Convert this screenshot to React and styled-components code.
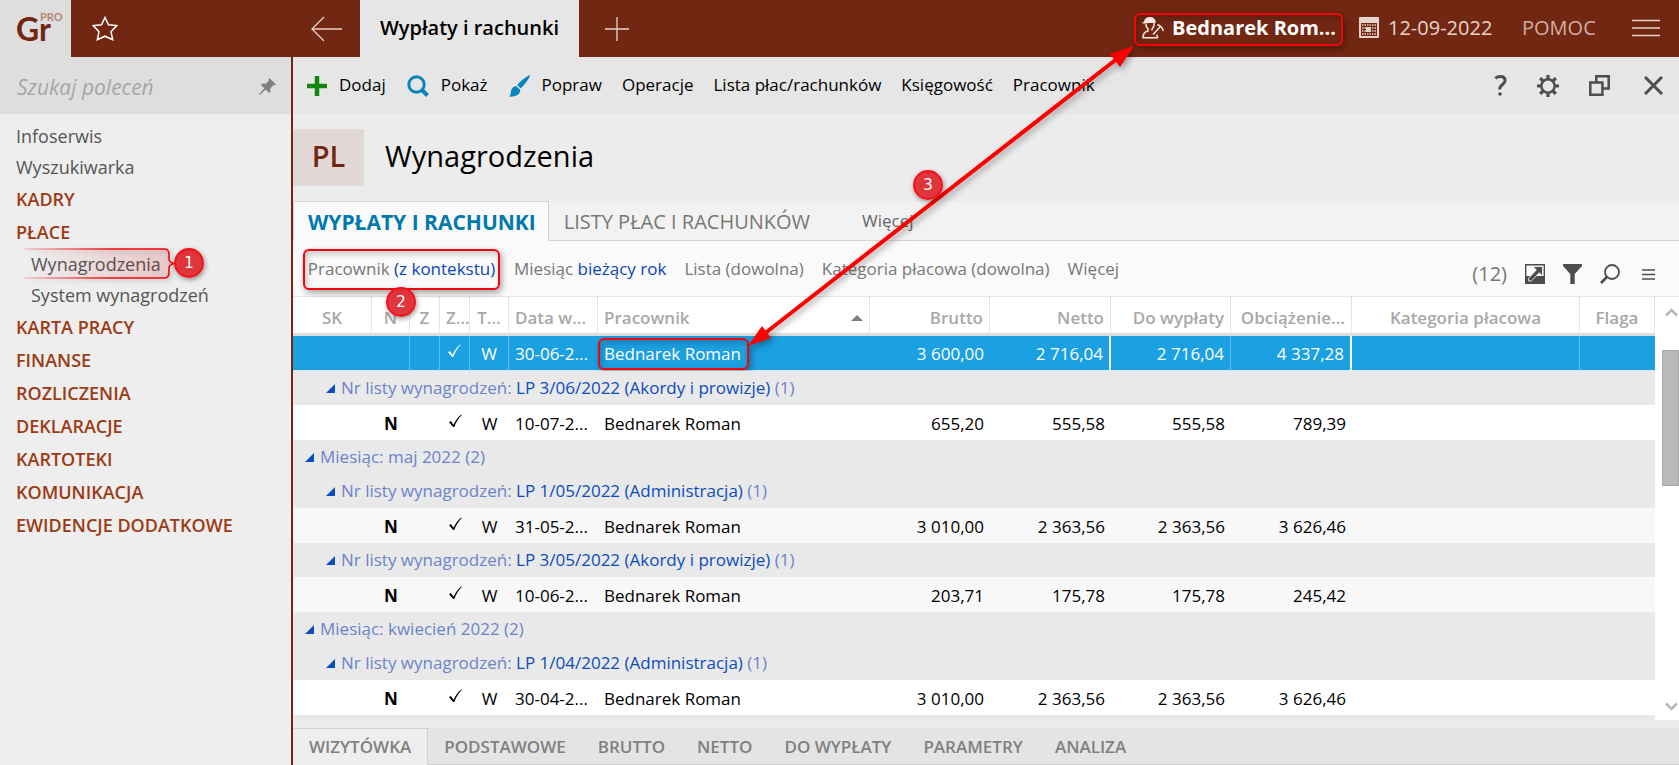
import styled, { createGlobalStyle, css } from "styled-components";

const GlobalStyle = createGlobalStyle`
  * {
    box-sizing: border-box;
  }
  body {
    margin: 0;
    font-family: "Open Sans", "Noto Sans", sans-serif;
    font-size: 17px;
    line-height: 24px;
    color: #000;
  }
  button {
    padding: 0;
    border: 0;
    background: none;
    font: inherit;
    color: inherit;
    white-space: nowrap;
    cursor: pointer;
  }
  svg {
    display: block;
    flex: none;
  }
`;

const Page = styled.div`
  position: relative;
  display: flex;
  flex-direction: column;
  height: 100vh;
  overflow: hidden;
  background: #ececec;
`;

/* top bar */

const TopBar = styled.header`
  display: flex;
  flex: none;
  height: 57px;
  background: #722712;
  color: #e6d3cd;
`;

const TopLeft = styled.div`
  display: flex;
  flex: none;
  width: 293px;
`;

const Logo = styled.a`
  width: 71px;
  background: #dedede;
`;

const TopButton = styled.button`
  display: flex;
  align-items: center;
  justify-content: center;
  width: ${(p) => p.$width}px;
`;

const WindowTab = styled.button`
  width: 219px;
  padding-bottom: 2px;
  background: #e6e6e6;
  color: #000;
  font-size: 20px;
  font-weight: 600;
`;

const TopRight = styled.div`
  display: flex;
  align-items: center;
  margin-left: auto;
  padding: 0 19px 2px 0;
`;

const frame = css`
  border: 2px solid #f5040b;
  border-radius: 6px;
  box-shadow: 2px 3px 6px rgba(0, 0, 0, 0.35), inset 2px 3px 6px rgba(0, 0, 0, 0.2);
`;

const UserButton = styled.button`
  display: flex;
  align-items: center;
  gap: 8px;
  width: 209px;
  height: 33px;
  padding: 0 0 3px 6px;
  margin-top: 4px;
  color: #fff;
  font-size: 20px;
  font-weight: 700;
  ${frame}
`;

const DateButton = styled.button`
  display: flex;
  align-items: center;
  gap: 9px;
  width: 147px;
  margin-left: 16px;
  font-size: 20px;
`;

const HelpButton = styled.button`
  width: 110px;
  margin-left: 16px;
  text-align: left;
  font-size: 20px;
  color: #cfaea4;
`;

/* sidebar */

const Body = styled.div`
  display: flex;
  flex: 1;
  min-height: 0;
`;

const Sidebar = styled.aside`
  flex: none;
  width: 293px;
  border-right: 2px solid #722712;
  background: #eee;
`;

const Search = styled.label`
  display: flex;
  align-items: center;
  height: 57px;
  padding: 2px 15px 0 17px;
  background: #dedede;
`;

const SearchInput = styled.input`
  flex: 1;
  min-width: 0;
  padding: 0;
  border: 0;
  outline: 0;
  background: none;
  font: italic 21px "Open Sans", sans-serif;

  &::placeholder {
    color: #a6a6a6;
    opacity: 1;
  }
`;

const Nav = styled.nav`
  display: flex;
  flex-direction: column;
  align-items: flex-start;
  padding: 6px 0 0 16px;
`;

const NavLink = styled.a`
  position: relative;
  display: flex;
  align-items: center;
  height: 31px;
  padding-left: ${(p) => (p.$sub ? "15px" : 0)};
  color: #555;
  font-size: 18px;
  text-decoration: none;
`;

const NavGroup = styled(NavLink)`
  height: 33px;
  color: #9c3b14;
  font-weight: 600;
`;

const NavMark = styled.svg`
  position: absolute;
  top: -1px;
  left: 8px;
  overflow: visible;
  pointer-events: none;
  filter: drop-shadow(2px 2px 2px rgba(0, 0, 0, 0.25));
`;

/* main panel */

const Main = styled.main`
  display: flex;
  flex: 1;
  flex-direction: column;
  min-width: 0;
`;

const Toolbar = styled.div`
  display: flex;
  flex: none;
  align-items: center;
  gap: 20px;
  height: 57px;
  padding: 0 16px 2px 14px;
  background: #e6e6e6;
`;

const ToolButton = styled.button`
  display: flex;
  align-items: center;
  gap: 12px;

  svg {
    margin-top: 2px;
  }
  & + &:has(svg) {
    margin-left: 1px;
  }
`;

const ToolRight = styled.div`
  display: flex;
  align-items: center;
  gap: 30px;
  margin-left: auto;
  padding-top: 2px;
  color: #4d4d4d;

  button:last-child {
    margin-left: 4px;
  }
`;

const TitleBar = styled.div`
  display: flex;
  flex: none;
  align-items: center;
  gap: 21px;
  height: 87px;
`;

const Initials = styled.div`
  width: 71px;
  height: 57px;
  background: #e2d9d7;
  color: #722712;
  font-size: 29px;
  font-weight: 600;
  line-height: 54px;
  text-align: center;
`;

const Title = styled.h1`
  height: 57px;
  margin: 0;
  font-size: 29px;
  font-weight: 400;
  line-height: 54px;
`;

const Tabs = styled.div`
  display: flex;
  flex: none;
  height: 40px;
  border-bottom: 1px solid #d4d4d4;
  background: #f2f2f2;
`;

const Tab = styled.button`
  padding: 2px 15px 0;
  color: #777;
  font-size: 20px;

  ${(p) =>
    p.$active &&
    css`
      margin-bottom: -1px;
      padding: 0 12px 0 14px;
      border: 1px solid #d4d4d4;
      border-bottom: 0;
      background: #fafafa;
      color: #0079ac;
      font-size: 21px;
      font-weight: 700;
    `}
`;

const MoreTab = styled.button`
  margin-left: 37px;
  color: #666;
`;

const Filters = styled.div`
  display: flex;
  flex: none;
  align-items: center;
  gap: 18px;
  height: 56px;
  padding: 1px 24px 0 10px;
  border-bottom: 1px solid #e6e6e6;
  background: #fafafa;
  color: #777;
`;

const Filter = styled.button`
  position: relative;

  b {
    color: #0b46b8;
    font-weight: 400;
  }

  ${(p) =>
    p.$framed &&
    css`
      width: 197px;
      height: 41px;
      margin-right: -4px;
      ${frame}
    `}
`;

const FilterTools = styled.div`
  display: flex;
  align-items: center;
  gap: 18px;
  margin-left: auto;
  padding-top: 10px;
  color: #4d4d4d;

  button:last-child {
    margin-left: 4px;
  }
`;

const Count = styled.span`
  color: #777;
  font-size: 20px;
`;

const Badge = styled.span`
  position: absolute;
  top: ${(p) => p.$top}px;
  left: ${(p) => p.$left}px;
  z-index: 2;
  width: 30px;
  height: 30px;
  border: 2px solid #f5101a;
  border-radius: 50%;
  background: rgba(222, 40, 45, 0.93);
  box-shadow: 1px 2px 5px rgba(0, 0, 0, 0.4);
  color: #fff;
  font-family: "DejaVu Sans", sans-serif;
  font-size: 15px;
  line-height: 26px;
  text-align: center;
`;

/* grid */

const GridArea = styled.div`
  display: flex;
  flex: 1;
  min-height: 0;
  overflow: hidden;
  background: #fff;
`;

const GridScroll = styled.div`
  flex: 1;
  min-width: 0;
  overflow: hidden;
`;

const Grid = styled.table`
  width: 100%;
  table-layout: fixed;
  border-collapse: separate;
  border-spacing: 0;
`;

const HeadCell = styled.th`
  height: 39px;
  padding: 5px 6px 0;
  border-right: 1px dotted #ccc;
  border-bottom: 3px solid #ddd;
  color: #a8a8a8;
  font-weight: 600;
  text-align: ${(p) => p.$align || "center"};
  white-space: nowrap;
  overflow: hidden;
`;

const HeadInner = styled.span`
  display: flex;
  align-items: center;
  justify-content: space-between;
`;

const Cell = styled.td`
  height: 35px;
  padding: 3px 6px 0;
  font-weight: ${(p) => (p.$bold ? 700 : 400)};
  text-align: ${(p) => p.$align || "center"};
  white-space: nowrap;

  svg {
    margin: 0 auto 7px;
  }
`;

const Row = styled.tr`
  background: ${(p) => (p.$shaded ? "#f8f8f8" : "#fff")};

  ${(p) =>
    p.$selected &&
    css`
      background: #1ba0e1;
      color: #fff;

      ${Cell} {
        padding-top: 2px;
        border-bottom: 1px solid #d3ebf7;
      }
      ${Cell}:nth-child(n + 2):nth-child(-n + 5),
      ${Cell}:nth-child(10),
      ${Cell}:nth-child(12) {
        border-right: 1px solid #62bfeb;
      }
      ${Cell}:nth-child(4),
      ${Cell}:nth-child(9),
      ${Cell}:nth-child(11) {
        border-right: 2px solid #f2f9fd;
      }
    `}
`;

const NameFrame = styled.span`
  display: block;
  width: 151px;
  height: 32px;
  margin: 0 -6px;
  padding-left: 4px;
  line-height: 27px;
  ${frame}
`;

const GroupCell = styled.td`
  height: 34px;
  padding: 0 0 0 ${(p) => (p.$level ? 33 : 12)}px;
  background: #e9e9e9;
  color: #6c84cc;

  div {
    display: flex;
    align-items: center;
    gap: 6px;
  }
  b {
    color: #0b4cbf;
    font-weight: 400;
  }
`;

const Scrollbar = styled.div`
  display: flex;
  flex: none;
  flex-direction: column;
  align-items: flex-end;
  width: 24px;
  padding: 8px 0 6px;
  color: #b8b8b8;
`;

const Thumb = styled.div`
  width: 17px;
  height: 136px;
  margin: 30px 0 auto;
  border: 1px solid #aaa;
  background: #b9b9b9;
`;

const ScrollButton = styled.button`
  padding: 3px 1px;
`;

const BottomTabs = styled.div`
  display: flex;
  flex: none;
  height: 37px;
  margin-top: 8px;
  border-top: 1px solid #e0e0e0;
  border-bottom: 1px solid #d0d0d0;
  background: #e4e4e4;
`;

const BottomTab = styled.button`
  padding: 0 16px;
  color: #808080;
  font-weight: 600;

  ${(p) =>
    p.$active &&
    css`
      margin: -1px 0;
      border: 1px solid #d0d0d0;
      border-width: 1px 1px 0 0;
      background: #eee;
    `}
`;

const ArrowLayer = styled.svg`
  position: absolute;
  inset: 0;
  width: 100%;
  height: 100%;
  pointer-events: none;
  filter: drop-shadow(2px 3px 3px rgba(0, 0, 0, 0.35));
`;

/* icons */

const LogoIcon = () => (
  <svg width="71" height="57" viewBox="0 0 71 57" fontFamily="Lato, sans-serif" fontWeight="700">
    <text x="16" y="41" fontSize="32" fill="#722712">
      Gr
    </text>
    <text x="40" y="21" fontSize="11" fill="#b48678">
      PRO
    </text>
  </svg>
);

const StarIcon = () => (
  <svg width="26" height="26" viewBox="0 0 26 26" fill="none" stroke="#fff" strokeWidth="1.5">
    <path d="M13 1.500l3.500 7.300 8.300.8-5.800 6.200 1.700 8-7.700-3.600-7.700 3.600 1.700-8L1.200 9.600l8.300-.8z" />
  </svg>
);

const BackIcon = () => (
  <svg width="32" height="26" viewBox="0 0 32 26" fill="none" stroke="currentColor" strokeWidth="1.3">
    <path d="M31 13H1M13 1L1 13l12 12" />
  </svg>
);

const AddIcon = () => (
  <svg width="26" height="26" viewBox="0 0 26 26" fill="none" stroke="currentColor" strokeWidth="1.3">
    <path d="M1 13h24M13 1v24" />
  </svg>
);

const WorkerIcon = () => (
  <svg width="22" height="22" viewBox="0 0 22 22" fill="none" stroke="#f3e9e6" strokeWidth="1.5">
    <path d="M2.500 5.500C3 2.500 5.500.8 8 .8s4.500 1.700 4.800 4.200z" fill="#f3e9e6" />
    <path d="M.500 5.800L13.500 4.500" strokeWidth="1.300" />
    <path d="M3.800 6.500c0 2.500.7 4 2.200 5.500v2C3 15 1 16 1 20.800h14.500c0-1.300-.3-2.300-.8-3M12.200 6c0 2.800-.7 4.500-2.200 6v1.500" />
    <path d="M11 17.500l7.500-8M15.300 7.800c3 .7 5.200 3 6 6.200" />
  </svg>
);

const CalendarIcon = () => (
  <svg width="20" height="21" viewBox="0 0 20 21">
    <path d="M1 0h18q1 0 1 1v19q0 1-1 1H1q-1 0-1-1V1q0-1 1-1z" fill="#e6d3cd" />
    <path d="M2 6h16v13H2z" fill="#722712" />
    <path d="M3 8h14M3 11h14M3 14h14M3 17h14" stroke="#e6d3cd" strokeWidth="1.500" strokeDasharray="1.500 1" />
    <path d="M7 10h5v5H7z" fill="#e6d3cd" />
  </svg>
);

const BurgerIcon = () => (
  <svg width="28" height="18" viewBox="0 0 28 18" stroke="currentColor" strokeWidth="1.500">
    <path d="M0 1.500h28M0 9h28M0 16.500h28" />
  </svg>
);

const PinIcon = () => (
  <svg width="17" height="17" viewBox="0 0 17 17" fill="#808080">
    <path d="M10.500 0L17 6.500l-1.200 1-1.300-.4-3.200 3.300.2 3.400-1.300 1.200-3.400-3.400L.8 17 0 16.200l5.400-5.900L2 6.900l1.200-1.300 3.400.2 3.300-3.200-.4-1.500z" />
  </svg>
);

const PlusIcon = () => (
  <svg width="20" height="20" viewBox="0 0 20 20" stroke="#11870f" strokeWidth="4.500">
    <path d="M0 10h20M10 0v20" />
  </svg>
);

const LensIcon = () => (
  <svg width="22" height="22" viewBox="0 0 22 22" fill="none" stroke="#0a85bb">
    <circle cx="9.500" cy="9.500" r="7.700" strokeWidth="3" />
    <path d="M14.500 14.500l6 6" strokeWidth="4" />
  </svg>
);

const BrushIcon = () => (
  <svg width="21" height="22" viewBox="0 0 21 22" fill="#0a85bb">
    <path d="M21 .3c.2 2-5 9-9.300 13.200L8.200 10C12 5.500 19 0 21 .3z" />
    <path d="M7.200 11l3.800 3.800c1 4.500-4.500 7.500-11 6.700 2-1 1.500-3 2-5.500.6-3 2.700-4.800 5.200-5z" />
  </svg>
);

const HelpIcon = () => (
  <svg width="13" height="21" viewBox="0 0 13 21" fill="none" stroke="currentColor" strokeWidth="3">
    <path d="M1.300 3.400C3 2 4.500 1.600 6.300 1.600c3 0 4.800 1.500 4.800 4 0 3.800-5.300 4-5.300 8v.8" />
    <circle cx="6" cy="19" r="1.800" fill="currentColor" stroke="none" />
  </svg>
);

const GearIcon = () => (
  <svg width="22" height="22" viewBox="0 0 22 22" fill="none" stroke="currentColor">
    <circle cx="11" cy="11" r="6.700" strokeWidth="2.500" />
    <path
      d="M11 0v4M11 18v4M0 11h4M18 11h4M3.200 3.200L6 6M16 16l2.800 2.800M18.800 3.200L16 6M6 16l-2.800 2.800"
      strokeWidth="3.200"
    />
  </svg>
);

const RestoreIcon = () => (
  <svg width="21" height="21" viewBox="0 0 21 21" fill="none" stroke="currentColor" strokeWidth="2.500">
    <path d="M1.300 7.600h12.100v12.100H1.300zM7.300 7.600V1.300h12.400v12.100h-6.300" />
  </svg>
);

const CloseIcon = () => (
  <svg width="19" height="19" viewBox="0 0 19 19" stroke="currentColor" strokeWidth="3">
    <path d="M1 1l17 17M18 1L1 18" />
  </svg>
);

const ExportIcon = () => (
  <svg width="20" height="20" viewBox="0 0 20 20">
    <path d="M.7.700h18.600v18.600H.7z" fill="#fff" stroke="#4d4d4d" strokeWidth="1.400" />
    <path d="M0 12h20v8H0z" fill="#4d4d4d" />
    <path d="M8 2.500h9.500V12l-3.200-3.200-8 8.200H3.500v-2.800l7.800-8.200z" fill="#4d4d4d" stroke="#fff" strokeWidth=".8" />
  </svg>
);

const FunnelIcon = () => (
  <svg width="19" height="20" viewBox="0 0 19 20" fill="currentColor">
    <path d="M0 0h19v2l-7.300 8v10H7.300V10L0 2z" />
  </svg>
);

const FindIcon = () => (
  <svg width="20" height="20" viewBox="0 0 20 20" fill="none" stroke="currentColor">
    <circle cx="12" cy="8" r="7" strokeWidth="1.800" />
    <path d="M6.800 13L1 19" strokeWidth="2.600" />
  </svg>
);

const ListIcon = () => (
  <svg width="13" height="11" viewBox="0 0 13 11" stroke="currentColor" strokeWidth="1.500">
    <path d="M0 1h13M0 5.500h13M0 10h13" />
  </svg>
);

const CheckIcon = () => (
  <svg width="13" height="14" viewBox="0 0 13 14" fill="currentColor">
    <path d="M0 8.200l1.800-1.300 2.700 3.800C6.500 6.500 9 3 12.300.5l.5.5C9.500 4.300 7 8.300 5.300 13H4.200z" />
  </svg>
);

const SortIcon = () => (
  <svg width="12" height="6" viewBox="0 0 12 6" fill="#808080">
    <path d="M6 0l6 6H0z" />
  </svg>
);

const FoldIcon = () => (
  <svg width="9" height="9" viewBox="0 0 9 9" fill="#0b4cbf">
    <path d="M9 0v9H0z" />
  </svg>
);

const Chevron = ({ down }) => (
  <svg width="13" height="9" viewBox="0 0 13 9" fill="none" stroke="currentColor" strokeWidth="2.500">
    <path d={down ? "M1 1.500l5.500 5.500L12 1.500" : "M1 7.500L6.500 2 12 7.500"} />
  </svg>
);

const navBefore = ["Infoserwis", "Wyszukiwarka"];
const navAfter = [
  "KARTA PRACY",
  "FINANSE",
  "ROZLICZENIA",
  "DEKLARACJE",
  "KARTOTEKI",
  "KOMUNIKACJA",
  "EWIDENCJE DODATKOWE",
];

const columns = [79, 38, 30, 30, 39, 89, null, 120, 121, 120, 121, 228, 75];

const rows = [
  { date: "30-06-2...", values: ["3 600,00", "2 716,04", "2 716,04", "4 337,28"], selected: true },
  { group: "Nr listy wynagrodzeń:", name: "LP 3/06/2022 (Akordy i prowizje)", count: 1, level: 1 },
  { date: "10-07-2...", flag: "N", values: ["655,20", "555,58", "555,58", "789,39"] },
  { group: "Miesiąc: maj 2022", count: 2, level: 0 },
  { group: "Nr listy wynagrodzeń:", name: "LP 1/05/2022 (Administracja)", count: 1, level: 1 },
  { date: "31-05-2...", flag: "N", values: ["3 010,00", "2 363,56", "2 363,56", "3 626,46"], shaded: true },
  { group: "Nr listy wynagrodzeń:", name: "LP 3/05/2022 (Akordy i prowizje)", count: 1, level: 1 },
  { date: "10-06-2...", flag: "N", values: ["203,71", "175,78", "175,78", "245,42"], shaded: true },
  { group: "Miesiąc: kwiecień 2022", count: 2, level: 0 },
  { group: "Nr listy wynagrodzeń:", name: "LP 1/04/2022 (Administracja)", count: 1, level: 1 },
  { date: "30-04-2...", flag: "N", values: ["3 010,00", "2 363,56", "2 363,56", "3 626,46"] },
];

const GroupRow = ({ row }) => (
  <tr>
    <GroupCell colSpan={13} $level={row.level}>
      <div>
        <FoldIcon />
        <span>
          {row.group} {row.name && <b>{row.name} </b>}({row.count})
        </span>
      </div>
    </GroupCell>
  </tr>
);

const DataRow = ({ row }) => (
  <Row $selected={row.selected} $shaded={row.shaded}>
    <Cell />
    <Cell $bold>{row.flag}</Cell>
    <Cell />
    <Cell>
      <CheckIcon />
    </Cell>
    <Cell>W</Cell>
    <Cell $align="left">{row.date}</Cell>
    <Cell $align="left">
      {row.selected ? <NameFrame>Bednarek Roman</NameFrame> : "Bednarek Roman"}
    </Cell>
    {row.values.map((value, i) => (
      <Cell key={i} $align="right">
        {value}
      </Cell>
    ))}
    <Cell />
    <Cell />
  </Row>
);

const App = () => {
  return (
    <Page>
      <GlobalStyle />
      <TopBar>
        <TopLeft>
          <Logo href="#">
            <LogoIcon />
          </Logo>
          <TopButton $width={68} aria-label="Ulubione">
            <StarIcon />
          </TopButton>
        </TopLeft>
        <TopButton $width={67} aria-label="Wstecz">
          <BackIcon />
        </TopButton>
        <WindowTab>Wypłaty i rachunki</WindowTab>
        <TopButton $width={76} aria-label="Nowa karta">
          <AddIcon />
        </TopButton>
        <TopRight>
          <UserButton>
            <WorkerIcon />
            Bednarek Rom...
          </UserButton>
          <DateButton>
            <CalendarIcon />
            12-09-2022
          </DateButton>
          <HelpButton>POMOC</HelpButton>
          <TopButton $width={28} aria-label="Menu">
            <BurgerIcon />
          </TopButton>
        </TopRight>
      </TopBar>

      <Body>
        <Sidebar>
          <Search>
            <SearchInput type="text" placeholder="Szukaj poleceń" aria-label="Szukaj poleceń" />
            <PinIcon />
          </Search>
          <Nav>
            {navBefore.map((item) => (
              <NavLink key={item} href="#">
                {item}
              </NavLink>
            ))}
            <NavGroup href="#">KADRY</NavGroup>
            <NavGroup href="#">PŁACE</NavGroup>
            <NavLink href="#" $sub>
              Wynagrodzenia
              <NavMark width="154" height="33" viewBox="0 0 154 33">
                <defs>
                  <linearGradient id="line" gradientUnits="userSpaceOnUse" x1="0" y1="0" x2="147" y2="0">
                    <stop offset="0" stopColor="#f5040b" stopOpacity="0.15" />
                    <stop offset="0.6" stopColor="#f5040b" />
                  </linearGradient>
                  <linearGradient id="fill">
                    <stop offset="0" stopColor="#f5040b" stopOpacity="0" />
                    <stop offset="1" stopColor="#f5040b" stopOpacity="0.14" />
                  </linearGradient>
                </defs>
                <path
                  d="M0 2h140q5 0 5 5v5q0 3 5 4.500-5 1.500-5 4.500v5q0 5-5 5H0"
                  fill="url(#fill)"
                  stroke="url(#line)"
                  strokeWidth="1.600"
                />
              </NavMark>
              <Badge $top={0} $left={158}>
                1
              </Badge>
            </NavLink>
            <NavLink href="#" $sub>
              System wynagrodzeń
            </NavLink>
            {navAfter.map((item) => (
              <NavGroup key={item} href="#">
                {item}
              </NavGroup>
            ))}
          </Nav>
        </Sidebar>

        <Main>
          <Toolbar>
            <ToolButton>
              <PlusIcon />
              Dodaj
            </ToolButton>
            <ToolButton>
              <LensIcon />
              Pokaż
            </ToolButton>
            <ToolButton>
              <BrushIcon />
              Popraw
            </ToolButton>
            <ToolButton>Operacje</ToolButton>
            <ToolButton>Lista płac/rachunków</ToolButton>
            <ToolButton>Księgowość</ToolButton>
            <ToolButton>Pracownik</ToolButton>
            <ToolRight>
              <button aria-label="Pomoc">
                <HelpIcon />
              </button>
              <button aria-label="Ustawienia">
                <GearIcon />
              </button>
              <button aria-label="Przywróć">
                <RestoreIcon />
              </button>
              <button aria-label="Zamknij">
                <CloseIcon />
              </button>
            </ToolRight>
          </Toolbar>

          <TitleBar>
            <Initials>PL</Initials>
            <Title>Wynagrodzenia</Title>
          </TitleBar>

          <Tabs>
            <Tab $active>WYPŁATY I RACHUNKI</Tab>
            <Tab>LISTY PŁAC I RACHUNKÓW</Tab>
            <MoreTab>Więcej</MoreTab>
          </Tabs>

          <Filters>
            <Filter $framed>
              Pracownik <b>(z kontekstu)</b>
              <Badge $top={36} $left={81}>
                2
              </Badge>
            </Filter>
            <Filter>
              Miesiąc <b>bieżący rok</b>
            </Filter>
            <Filter>Lista (dowolna)</Filter>
            <Filter>Kategoria płacowa (dowolna)</Filter>
            <Filter>Więcej</Filter>
            <FilterTools>
              <Count>(12)</Count>
              <button aria-label="Eksport">
                <ExportIcon />
              </button>
              <button aria-label="Filtr">
                <FunnelIcon />
              </button>
              <button aria-label="Szukaj">
                <FindIcon />
              </button>
              <button aria-label="Opcje listy">
                <ListIcon />
              </button>
            </FilterTools>
          </Filters>

          <GridArea>
            <GridScroll>
              <Grid>
                <colgroup>
                  {columns.map((width, i) => (
                    <col key={i} width={width || undefined} />
                  ))}
                </colgroup>
                <thead>
                  <tr>
                    <HeadCell>SK</HeadCell>
                    <HeadCell>N</HeadCell>
                    <HeadCell>Z</HeadCell>
                    <HeadCell>Z...</HeadCell>
                    <HeadCell>T...</HeadCell>
                    <HeadCell $align="left">Data w...</HeadCell>
                    <HeadCell $align="left">
                      <HeadInner>
                        Pracownik
                        <SortIcon />
                      </HeadInner>
                    </HeadCell>
                    <HeadCell $align="right">Brutto</HeadCell>
                    <HeadCell $align="right">Netto</HeadCell>
                    <HeadCell $align="right">Do wypłaty</HeadCell>
                    <HeadCell $align="right">Obciążenie...</HeadCell>
                    <HeadCell>Kategoria płacowa</HeadCell>
                    <HeadCell>Flaga</HeadCell>
                  </tr>
                </thead>
                <tbody>
                  {rows.map((row, i) =>
                    row.group ? <GroupRow key={i} row={row} /> : <DataRow key={i} row={row} />
                  )}
                  <tr>
                    <GroupCell colSpan={13} />
                  </tr>
                </tbody>
              </Grid>
            </GridScroll>
            <Scrollbar>
              <ScrollButton aria-label="W górę">
                <Chevron />
              </ScrollButton>
              <Thumb />
              <ScrollButton aria-label="W dół">
                <Chevron down />
              </ScrollButton>
            </Scrollbar>
          </GridArea>

          <BottomTabs>
            <BottomTab $active>WIZYTÓWKA</BottomTab>
            <BottomTab>PODSTAWOWE</BottomTab>
            <BottomTab>BRUTTO</BottomTab>
            <BottomTab>NETTO</BottomTab>
            <BottomTab>DO WYPŁATY</BottomTab>
            <BottomTab>PARAMETRY</BottomTab>
            <BottomTab>ANALIZA</BottomTab>
          </BottomTabs>
        </Main>
      </Body>

      <Badge $top={170} $left={913}>
        3
      </Badge>
      <ArrowLayer fill="#f00">
        <path d="M764 334L1118 58" stroke="#f00" strokeWidth="4" />
        <path d="M748 346l14-20 9 12z" />
        <path d="M1134 46l-24 8 10 13z" />
      </ArrowLayer>
    </Page>
  );
};

export default App;
